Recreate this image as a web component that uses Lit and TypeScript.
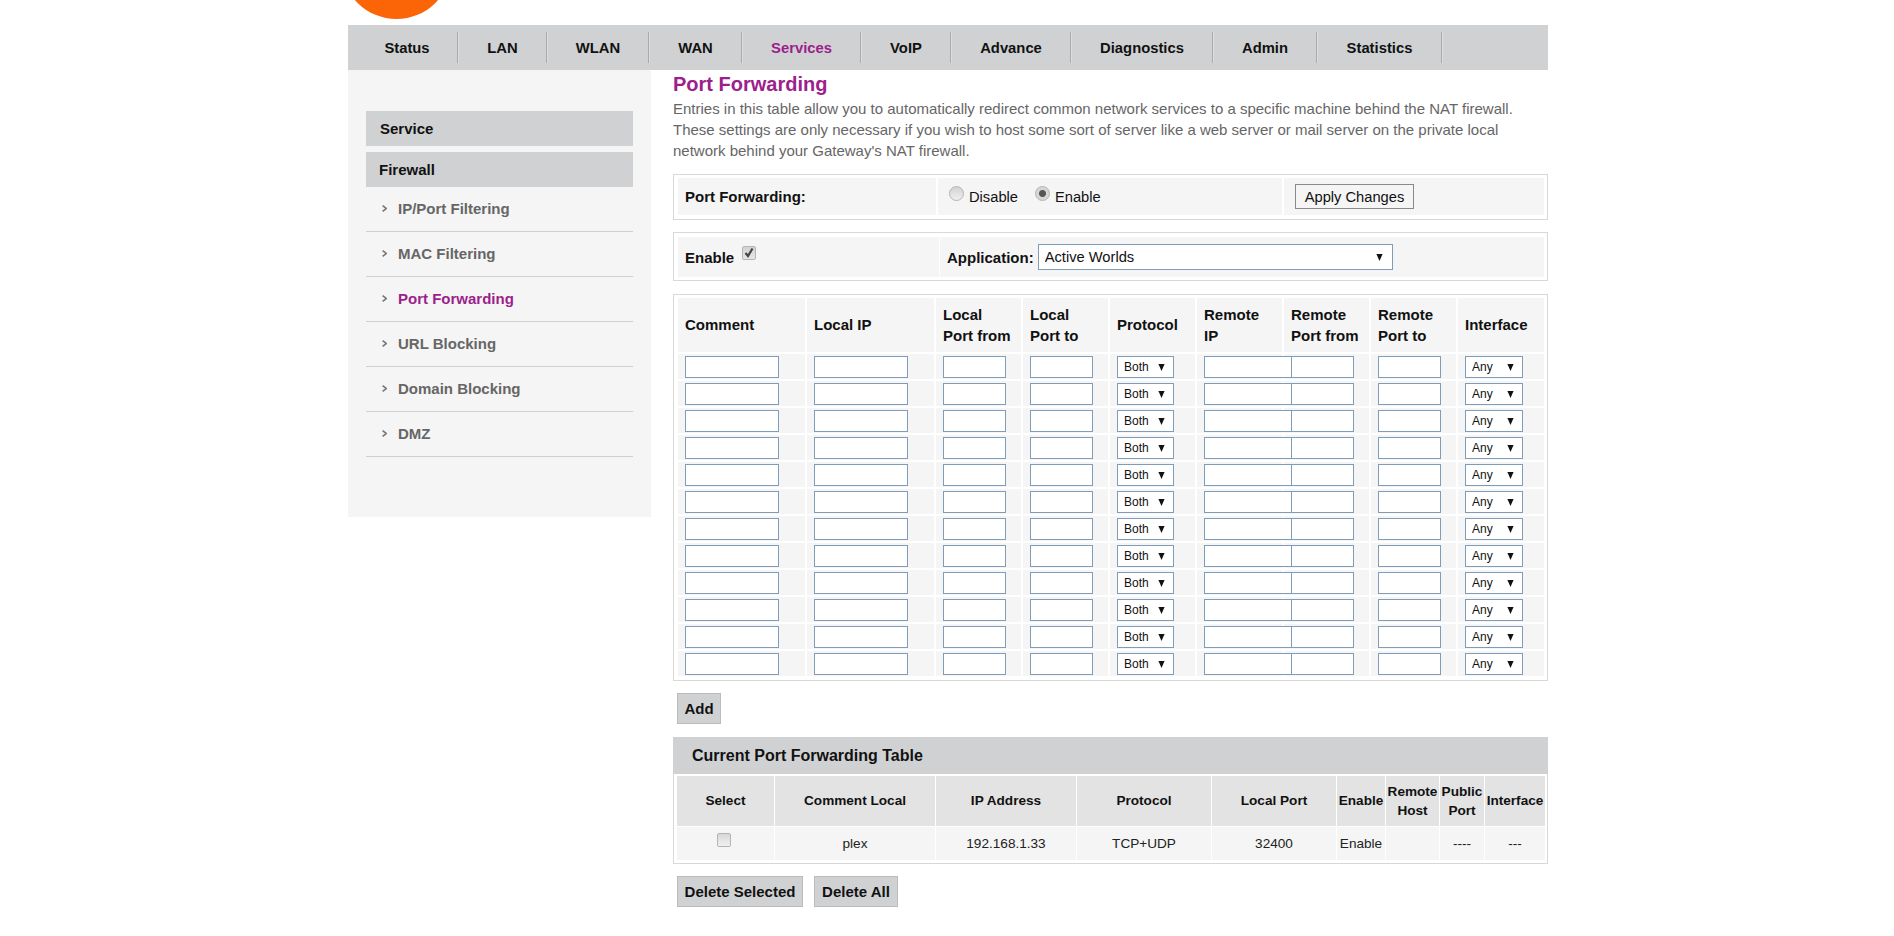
import { LitElement, html, css } from "lit";
import { customElement } from "lit/decorators.js";

const NAV: [string, number][] = [
  ["Status", 102], ["LAN", 89], ["WLAN", 102], ["WAN", 93], ["Services", 119],
  ["VoIP", 90], ["Advance", 120], ["Diagnostics", 142], ["Admin", 104], ["Statistics", 125],
];
const SIDE = ["IP/Port Filtering", "MAC Filtering", "Port Forwarding", "URL Blocking", "Domain Blocking", "DMZ"];
const COLS: [string, string][] = [
  ["Comment", "w94"], ["Local IP", "w94"], ["Local|Port from", "w63"], ["Local|Port to", "w63"],
  ["Protocol", "sel"], ["Remote|IP", "w94"], ["Remote|Port from", "w63"], ["Remote|Port to", "w63"], ["Interface", "sel"],
];
const ROWS = Array.from({ length: 12 }, (_, i) => i);
const arrow = html`<svg class="arrow" width="7" height="7" viewBox="0 0 7 7"><path d="M0.4 0H6.6L3.5 7Z" fill="#111"/></svg>`;

@customElement("app-root")
export class AppRoot extends LitElement {
  static styles = css`
    :host { display: block; font-family: "Liberation Sans", Arial, sans-serif; font-size: 14px; color: #111; }
    * { box-sizing: border-box; }
    .page { width: 1200px; margin-left: 348px; }
    .logo { display: block; height: 25px; }
    .nav { display: flex; height: 45px; background: #d0d1d3; padding-left: 8px; }
    .nav a { position: relative; display: block; text-align: center; line-height: 47px; font-weight: bold; font-size: 14.8px; color: #111; }
    .nav a::after { content: ""; position: absolute; right: 0; top: 7px; height: 31px; width: 1px; background: #a9aaac; box-shadow: 1px 0 0 #dcdde0; }
    .nav a.on { color: #9c1f8c; }
    .body { display: flex; }
    .side { width: 303px; height: 447px; background: #f5f5f5; padding: 41px 18px 0; flex: none; }
    .head { height: 35px; line-height: 36px; background: #d0d1d3; font-weight: bold; font-size: 15px; padding-left: 14px; margin-bottom: 6px; color: #111; }
    .head.b { padding-left: 13px; margin-bottom: 0; }
    .item { display: flex; align-items: center; height: 45px; padding-bottom: 1px; border-bottom: 1px solid #cfcfcf; font-weight: bold; font-size: 15px; color: #666; padding-left: 16px; gap: 11px; }
    .item.on { color: #9c1f8c; }
    .item svg { flex: none; }
    .main { width: 875px; margin-left: 22px; }
    h1 { margin: 0; font-size: 20px; line-height: 28px; height: 28px; font-weight: bold; color: #9c1f8c; }
    p { margin: 0 0 13px; font-size: 15px; line-height: 21px; color: #666; height: 63px; }
    .box { border: 1px solid #d8d8d8; }
    .box1 { height: 46px; padding: 3px 3px 4px 4px; display: grid; grid-template-columns: 258px 344px 260px; gap: 2px; margin-bottom: 12px; }
    .box2 { height: 49px; padding: 4px 3px 3px 4px; display: grid; grid-template-columns: 260.5px 604px; gap: 1.5px; margin-bottom: 13px; }
    .cell { background: #f5f5f5; display: flex; align-items: center; }
    .cell.radios { padding-left: 11px; }
    .lbl { font-weight: bold; font-size: 15px; padding-left: 7px; color: #111; }
    .radio { appearance: none; margin: 0; width: 15px; height: 15px; border-radius: 50%; border: 1px solid #b4b4b4; background: linear-gradient(#d2d2d2, #f0f0f0); position: relative; top: -3px; }
    .radio:checked { background: radial-gradient(circle, #555 0 3px, #d6d6d6 4px); }
    .rtxt { margin-left: 5px; margin-right: 17px; font-size: 14.7px; }
    .apply { margin-left: 11px; width: 119px; height: 25px; padding: 0; font: 14.7px "Liberation Sans", Arial, sans-serif; color: #111; background: #f5f5f5; border: 1px solid #8a8a8a; }
    .chk { position: relative; display: block; width: 14px; height: 14px; margin-left: 8px; top: -4px; }
    .chk input { appearance: none; display: block; margin: 0; width: 14px; height: 14px; border-radius: 2px; border: 1px solid #b4b4b4; background: linear-gradient(#d2d2d2, #e6e6e6); }
    .chk svg { position: absolute; left: 2px; top: 1px; pointer-events: none; }
    .sw { position: relative; display: inline-block; vertical-align: top; }
    .sw .arrow { position: absolute; top: 50%; margin-top: -3.5px; right: 9.5px; pointer-events: none; }
    select { appearance: none; display: block; border: 1px solid #7f9db9; border-radius: 0; background: #fff; color: #111; font-family: "Liberation Sans", Arial, sans-serif; margin: 0; }
    .app { margin-left: 4px; }
    .app select { width: 355px; height: 26px; font-size: 14.7px; padding: 0 0 0 6px; }
    .pf { table-layout: fixed; width: 870px; border-collapse: separate; border-spacing: 2px; }
    .box3 { padding: 1px 1px 2px 2px; height: 387px; margin-bottom: 12px; }
    .pf th { height: 54px; padding: 0 0 1px 7px; background: #f5f5f5; text-align: left; vertical-align: middle; font-size: 15px; line-height: 21px; font-weight: bold; color: #111; white-space: nowrap; }
    .pf td { height: 25px; padding: 2px 0 0 7px; background: #f5f5f5; vertical-align: top; line-height: 0; }
    .pf input { display: inline-block; vertical-align: top; height: 22px; margin: 0; padding: 0; border: 1px solid #7f9db9; background: #fff; border-radius: 0; }
    .w94 { width: 94px; }
    .w63 { width: 63px; }
    .s select { height: 22px; font-size: 12px; padding: 0 0 0 6px; line-height: 20px; }
    .s.p select { width: 57px; }
    .s.i select { width: 58px; }
    .btn { display: block; height: 31px; padding: 0; border: 1px solid #bcbcbc; background: #d0d1d3; font: bold 15px "Liberation Sans", Arial, sans-serif; color: #111; }
    .add { width: 44px; margin: 0 0 13px 4px; }
    .delsel { width: 126px; }
    .delall { width: 84px; }
    .bar { height: 37px; line-height: 37px; background: #d0d1d3; padding-left: 19px; font-size: 16px; font-weight: bold; color: #111; }
    .box4 { border-top: 0; padding: 1px 1px 2px 2px; height: 90px; margin-bottom: 12px; }
    .cur { table-layout: fixed; width: 870px; border-collapse: separate; border-spacing: 1px; }
    .cur th { height: 50px; padding: 0 0 1px; background: #e3e3e3; font-size: 13.6px; line-height: 19px; font-weight: bold; text-align: center; color: #111; white-space: nowrap; }
    .cur td { height: 33px; padding: 0; background: #f5f5f5; font-size: 13.6px; text-align: center; color: #222; }
    .cur input { appearance: none; display: inline-block; margin: 0 3px 8px 0; width: 14px; height: 14px; border: 1px solid #b4b4b4; border-radius: 2px; background: linear-gradient(#d8d8d8, #f0f0f0); vertical-align: middle; }
    .acts { display: flex; gap: 11px; padding-left: 4px; }
  `;

  render() {
    const cw = [127, 127, 85, 85, 85, 85, 85, 85, 86];
    const cur = [97, 160, 140, 134, 124, 48, 53, 44, 60];
    return html`
      <div class="page">
        <svg class="logo" width="120" height="25" viewBox="0 0 120 25"><circle cx="48.5" cy="-36" r="55" fill="#fb6508"/></svg>
        <div class="nav">${NAV.map(([n, w]) => html`<a class=${n === "Services" ? "on" : ""} style="width:${w}px">${n}</a>`)}</div>
        <div class="body">
          <div class="side">
            <div class="head">Service</div>
            <div class="head b">Firewall</div>
            ${SIDE.map((s) => html`<div class="item ${s === "Port Forwarding" ? "on" : ""}">
              <svg width="5" height="7" viewBox="0 0 5 7"><path d="M0.6 0.6L4.2 3.5L0.6 6.4" fill="none" stroke="#777" stroke-width="1.6"/></svg>${s}</div>`)}
          </div>
          <div class="main">
            <h1>Port Forwarding</h1>
            <p>Entries in this table allow you to automatically redirect common network services to a specific machine behind the NAT firewall.<br>These settings are only necessary if you wish to host some sort of server like a web server or mail server on the private local<br>network behind your Gateway's NAT firewall.</p>
            <div class="box box1">
              <div class="cell"><span class="lbl">Port Forwarding:</span></div>
              <div class="cell radios">
                <input class="radio" type="radio" name="pf"><span class="rtxt">Disable</span>
                <input class="radio" type="radio" name="pf" checked><span class="rtxt">Enable</span>
              </div>
              <div class="cell"><button class="apply">Apply Changes</button></div>
            </div>
            <div class="box box2">
              <div class="cell"><span class="lbl">Enable</span>
                <span class="chk"><input type="checkbox" checked><svg width="10" height="11" viewBox="0 0 10 11"><path d="M1.5 6L4 9L8.5 1.5" fill="none" stroke="#444" stroke-width="2.2"/></svg></span></div>
              <div class="cell"><span class="lbl">Application:</span>
                <span class="sw app"><select><option>Active Worlds</option></select>${arrow}</span></div>
            </div>
            <div class="box box3">
              <table class="pf">
                <colgroup>${cw.map((w) => html`<col style="width:${w}px">`)}</colgroup>
                <thead><tr>${COLS.map(([t]) => {
                  const [a, b] = t.split("|");
                  return html`<th>${a}${b ? html`<br>${b}` : ""}</th>`;
                })}</tr></thead>
                <tbody>${ROWS.map(() => html`<tr>${COLS.map(([t, c]) =>
                  c === "sel"
                    ? html`<td><span class="sw s ${t === "Protocol" ? "p" : "i"}"><select><option>${t === "Protocol" ? "Both" : "Any"}</option></select>${arrow}</span></td>`
                    : html`<td><input class=${c} type="text"></td>`
                )}</tr>`)}</tbody>
              </table>
            </div>
            <button class="btn add">Add</button>
            <div class="bar">Current Port Forwarding Table</div>
            <div class="box box4">
              <table class="cur">
                <colgroup>${cur.map((w) => html`<col style="width:${w}px">`)}</colgroup>
                <thead><tr><th>Select</th><th>Comment Local</th><th>IP Address</th><th>Protocol</th><th>Local Port</th><th>Enable</th><th>Remote<br>Host</th><th>Public<br>Port</th><th>Interface</th></tr></thead>
                <tbody><tr><td><input type="checkbox"></td><td>plex</td><td>192.168.1.33</td><td>TCP+UDP</td><td>32400</td><td>Enable</td><td></td><td>----</td><td>---</td></tr></tbody>
              </table>
            </div>
            <div class="acts">
              <button class="btn delsel">Delete Selected</button>
              <button class="btn delall">Delete All</button>
            </div>
          </div>
        </div>
      </div>
    `;
  }
}
